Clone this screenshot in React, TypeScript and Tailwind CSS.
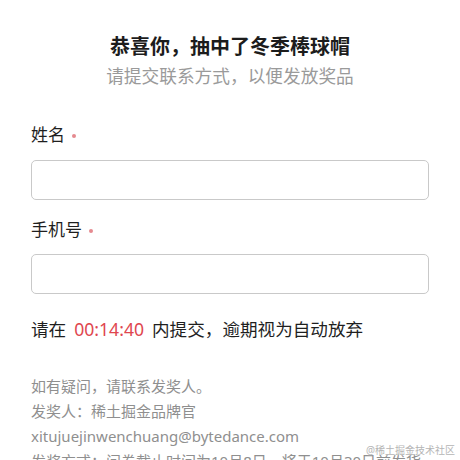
import React from "react";

const font = { fontFamily: '"Noto Sans", "Noto Sans CJK SC", sans-serif' };

function FieldLabel({ text }: { text: string }) {
  return (
    <div className="flex items-center text-[17px] leading-[26px] text-[#1f1f1f]">
      <span>{text}</span>
      <span className="ml-[7px] mt-[2px] h-[4px] w-[4px] rounded-full bg-[#e58a8f]" />
    </div>
  );
}

export default function App() {
  return (
    <div className="relative h-[460px] w-[460px] overflow-hidden bg-white" style={font}>
      <div className="px-[31px] pt-[33px]">
        <h1 className="text-center text-[20px] font-bold leading-[28px] text-[#1c1c1c]">恭喜你，抽中了冬季棒球帽</h1>
        <p className="mt-[2px] text-center text-[17.7px] leading-[26px] text-[#9a9a9a]">请提交联系方式，以便发放奖品</p>

        <div className="mt-[33px]">
          <FieldLabel text="姓名" />
          <input className="mt-[12px] block h-[40px] w-full rounded-[5px] border border-[#c9c9c9] bg-white px-3 outline-none" />
        </div>

        <div className="mt-[17px]">
          <FieldLabel text="手机号" />
          <input className="mt-[11px] block h-[40px] w-full rounded-[5px] border border-[#c9c9c9] bg-white px-3 outline-none" />
        </div>

        <p className="mt-[22px] flex items-center text-[17.6px] leading-[26px] text-[#1f1f1f]">
          <span>请在</span>
          <span className="mx-[8px] text-[#e0464f]">00:14:40</span>
          <span>内提交，逾期视为自动放弃</span>
        </p>

        <div className="mt-[32px] text-[15px] leading-[25px] text-[#8f8f8f]">
          <p>如有疑问，请联系发奖人。</p>
          <p>发奖人：稀土掘金品牌官</p>
          <p>xitujuejinwenchuang@bytedance.com</p>
          <p className="whitespace-nowrap">发奖方式：问卷截止时间为10月8日，将于10月30日前发货</p>
        </div>
      </div>

      <span className="absolute bottom-[3px] right-[5px] text-[10px] leading-[14px] text-[#b5b5b5] [text-shadow:0_0_2px_#fff]">
        @稀土掘金技术社区
      </span>
    </div>
  );
}
